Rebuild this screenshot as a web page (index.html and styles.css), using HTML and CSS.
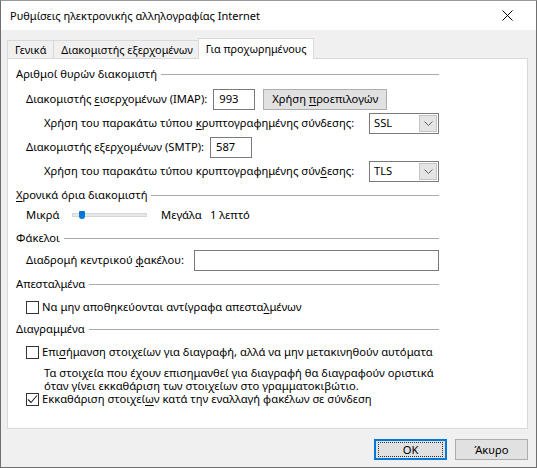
FILE: index.html
```html
<!DOCTYPE html>
<html lang="el">
<head>
<meta charset="utf-8">
<title>Ρυθμίσεις ηλεκτρονικής αλληλογραφίας Internet</title>
<link rel="stylesheet" href="styles.css">
</head>
<body>
<div class="window">
  <div class="titlebar">
    <span class="title">Ρυθμίσεις ηλεκτρονικής αλληλογραφίας Internet</span>
    <span class="close"><svg width="11" height="11" viewBox="0 0 11 11"><path d="M0.5 0.5L10.5 10.5M10.5 0.5L0.5 10.5" stroke="#000" stroke-width="1" fill="none"/></svg></span>
  </div>
  <div class="client">
    <div class="tabs">
      <div class="tab">Γενικά</div>
      <div class="tab">Διακομιστής εξερχομένων</div>
      <div class="tab active">Για προχωρημένους</div>
    </div>
    <div class="panel">
      <div class="content">
        <div class="header h1"><span>Αριθμοί θυρών διακομιστή</span><i class="rule"></i></div>
        <div class="row r-imap">
          <span class="lbl">Διακομιστής <u>ε</u>ισερχομένων (IMAP):</span>
          <span class="input port">993</span>
          <span class="button defaults"><span>Χρήση <u>π</u>ροεπιλογών</span></span>
        </div>
        <div class="row enc r-enc1">
          <span class="lbl">Χρήση του παρακάτω τύπου <u>κ</u>ρυπτογραφημένης σύνδεσης:</span>
          <span class="select"><span class="val">SSL</span><span class="drop"><svg width="9" height="5" viewBox="0 0 9 5"><path d="M0.5 0.5L4.5 4.5L8.5 0.5" stroke="#606060" fill="none"/></svg></span></span>
        </div>
        <div class="row r-smtp">
          <span class="lbl">Διακομιστής εξερχομένων (SMTP):</span>
          <span class="input port">587</span>
        </div>
        <div class="row enc r-enc2">
          <span class="lbl">Χρήση του παρακάτω τύπου κρυπτογραφημένης σύν<u>δ</u>εσης:</span>
          <span class="select"><span class="val">TLS</span><span class="drop"><svg width="9" height="5" viewBox="0 0 9 5"><path d="M0.5 0.5L4.5 4.5L8.5 0.5" stroke="#606060" fill="none"/></svg></span></span>
        </div>
        <div class="header h2"><span><u>Χ</u>ρονικά όρια διακομιστή</span><i class="rule"></i></div>
        <div class="row r-slider">
          <span class="lbl small">Μικρά</span>
          <span class="slider"><span class="track"></span><span class="thumb"></span></span>
          <span class="lbl large">Μεγάλα</span>
          <span class="lbl">1 λεπτό</span>
        </div>
        <div class="header h3"><span>Φάκελοι</span><i class="rule"></i></div>
        <div class="row r-folder">
          <span class="lbl">Διαδρομή κεντρικού <u>φ</u>ακέλου:</span>
          <span class="input path"></span>
        </div>
        <div class="header h4"><span>Απεσταλμένα</span><i class="rule"></i></div>
        <div class="row cb r-cb1">
          <span class="box"></span>
          <span class="lbl">Να μην αποθηκεύονται αντίγραφα απεστα<u>λ</u>μένων</span>
        </div>
        <div class="header h5"><span>Διαγραμμένα</span><i class="rule"></i></div>
        <div class="row cb r-cb2">
          <span class="box"></span>
          <span class="lbl">Επι<u>σ</u>ήμανση στοιχείων για διαγραφή, αλλά να μην μετακινηθούν αυτόματα</span>
        </div>
        <div class="desc">Τα στοιχεία που έχουν επισημανθεί για διαγραφή θα διαγραφούν οριστικά<br>όταν γίνει εκκαθάριση των στοιχείων στο γραμματοκιβώτιο.</div>
        <div class="row cb r-cb3">
          <span class="box checked"><svg width="11" height="11" viewBox="0 0 11 11"><path d="M1 5.5L4 8.5L10 1.5" stroke="#222" stroke-width="1.1" fill="none"/></svg></span>
          <span class="lbl">Εκκαθάριση στοιχεί<u>ω</u>ν κατά την εναλλαγή φακέλων σε σύνδεση</span>
        </div>
      </div>
    </div>
    <div class="actions">
      <span class="button ok"><span class="focus">OK</span></span>
      <span class="button cancel">Άκυρο</span>
    </div>
  </div>
</div>
</body>
</html>
```
FILE: styles.css
```css
* { box-sizing: border-box; }
html, body { margin: 0; padding: 0; }
body {
  width: 537px;
  height: 468px;
  font-family: "Noto Sans", "Open Sans", sans-serif;
  font-size: 11.2px;
  line-height: 14px;
  color: #000;
  background: #f0f0f0;
}
u { text-decoration: underline; text-underline-offset: 2px; }
.window {
  width: 537px;
  height: 468px;
  border: 1px solid #6f6f6f;
  border-top-color: #9a9a9a;
  background: #f0f0f0;
  display: flex;
  flex-direction: column;
}
.titlebar {
  height: 29px;
  background: #fff;
  display: flex;
  align-items: center;
  padding-left: 9px;
}
.title { font-size: 11px; flex: 1; }
.close {
  width: 46px;
  height: 29px;
  display: flex;
  align-items: center;
  justify-content: center;
  margin-right: 6px;
}
.client {
  flex: 1;
  padding: 0 8px 0 6px;
  display: flex;
  flex-direction: column;
}
.tabs {
  display: flex;
  align-items: flex-end;
  height: 28px;
  position: relative;
  z-index: 1;
  font-size: 10.8px;
}
.tab {
  height: 18px;
  padding: 0 7px 0 7px;
  border: 1px solid #d9d9d9;
  border-bottom: none;
  border-right: none;
  background: #f0f0f0;
  display: flex;
  align-items: center;
  white-space: nowrap;
}
.tab.active {
  height: 21px;
  background: #fff;
  border-right: 1px solid #d9d9d9;
  margin-left: -2px;
  margin-bottom: -1px;
  padding: 0 7px 1px;
}
.panel {
  height: 371px;
  background: #fff;
  border: 1px solid #d9d9d9;
}
.content {
  width: 431px;
  padding-left: 8px;
  display: flex;
  flex-direction: column;
}
.header {
  height: 20px;
  display: flex;
  align-items: center;
  white-space: nowrap;
}
.header .rule {
  flex: 1;
  height: 1px;
  background: #a9a9a9;
  margin-left: 4px;
  margin-top: 1px;
}
.row {
  height: 22px;
  display: flex;
  align-items: center;
  padding-left: 10px;
  white-space: nowrap;
}
.row > * { flex-shrink: 0; }
.row.enc { padding-left: 28px; }
.h1 { margin-top: 5px; }
.r-imap { margin-top: 4px; }
.r-enc1, .r-smtp, .r-enc2 { margin-top: 2px; }
.h2 { margin-top: 3px; }
.r-slider { height: 20px; }
.h3 { margin-top: 3px; }
.r-folder { margin-top: 1px; }
.h4 { margin-top: 3px; }
.r-cb1 { margin-top: 3px; height: 20px; }
.h5 { margin-top: 2px; }
.r-cb2 { margin-top: 3px; height: 20px; }
.r-cb3 { height: 14px; }
.input {
  height: 21px;
  border: 1px solid #7a7a7a;
  background: #fff;
  display: flex;
  align-items: center;
  padding-left: 5px;
}
.port { width: 42px; margin-left: 6px; }
.row .path { flex: 1 1 auto; margin-left: 10px; }
.button {
  height: 21px;
  background: #e1e1e1;
  border: 1px solid #adadad;
  display: flex;
  align-items: center;
  justify-content: center;
}
.defaults { width: 124px; margin-left: 8px; }
.select {
  margin-left: auto;
  width: 70px;
  height: 21px;
  border: 1px solid #7a7a7a;
  background: #fff;
  display: flex;
  align-items: stretch;
}
.select .val { flex: 1; padding-left: 4px; display: flex; align-items: center; }
.select .drop {
  width: 18px;
  margin: 1px;
  background: #e5e5e5;
  border: 1px solid #c4c4c4;
  display: flex;
  align-items: center;
  justify-content: center;
}
.small { width: 46px; }
.slider {
  position: relative;
  width: 75px;
  height: 20px;
  margin-right: 14px;
}
.slider .track {
  position: absolute;
  left: 0;
  right: 0;
  top: 8px;
  height: 4px;
  background: #e7eaea;
  border: 1px solid #d6d6d6;
}
.slider .thumb {
  position: absolute;
  left: 7px;
  top: 6px;
  width: 6px;
  height: 8px;
  background: #0078d7;
  border-radius: 1px 1px 3px 3px;
}
.large { width: 49px; }
.cb .box {
  width: 13px;
  height: 13px;
  border: 1px solid #333;
  background: #fff;
  margin-right: 3px;
  display: flex;
  align-items: center;
  justify-content: center;
}
.desc {
  margin-top: 4px;
  height: 26px;
  line-height: 13px;
  padding-left: 28px;
  white-space: nowrap;
}
.actions {
  display: flex;
  justify-content: flex-end;
  gap: 8px;
  margin-top: 10px;
}
.ok, .cancel { width: 73px; height: 21px; }
.ok { border: 1px solid #0078d7; box-shadow: inset 0 0 0 1px #0078d7; }
.ok .focus {
  width: 65px;
  height: 15px;
  border: 1px dotted #333;
  display: flex;
  align-items: center;
  justify-content: center;
}
```
